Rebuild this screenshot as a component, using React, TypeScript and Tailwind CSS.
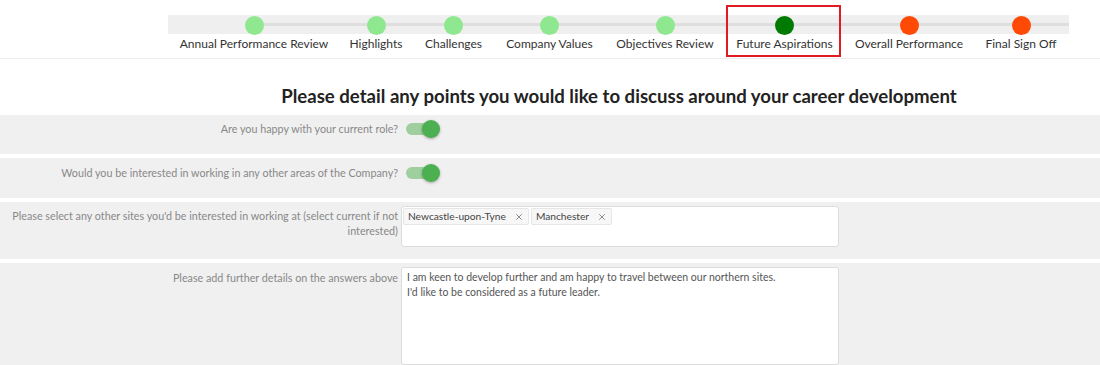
import { X } from 'lucide-react';

const steps = [
  { label: 'Annual Performance Review', color: 'bg-[#8fe88f]', w: 'w-[170px]' },
  { label: 'Highlights', color: 'bg-[#8fe88f]', w: 'w-[74px]' },
  { label: 'Challenges', color: 'bg-[#8fe88f]', w: 'w-[81px]' },
  { label: 'Company Values', color: 'bg-[#8fe88f]', w: 'w-[111px]' },
  { label: 'Objectives Review', color: 'bg-[#8fe88f]', w: 'w-[120px]' },
  { label: 'Future Aspirations', color: 'bg-[#007a00]', w: 'w-[119px]', active: true },
  { label: 'Overall Performance', color: 'bg-[#ff4a06]', w: 'w-[130px]' },
  { label: 'Final Sign Off', color: 'bg-[#ff4a06]', w: 'w-[94px]' },
];

function Toggle() {
  return (
    <div className="relative w-[36px] h-[18px] flex items-center">
      <div className="w-[30px] h-[12px] ml-[2px] rounded-full bg-[#9fcf9f]" />
      <div className="absolute right-0 top-0 w-[18px] h-[18px] rounded-full bg-[#4caf50] shadow-[0_1px_3px_rgba(0,0,0,0.3)]" />
    </div>
  );
}

function Tag({ text }: { text: string }) {
  return (
    <span className="flex items-center gap-[8px] h-[17px] px-[4px] bg-[#f7f7f7] border border-[#e6e6e6] rounded-[2px] text-[10.2px] text-[#444]">
      {text}
      <X className="w-[10px] h-[10px] text-[#777]" strokeWidth={2} />
    </span>
  );
}

export default function App() {
  return (
    <div className="w-[1100px] h-[365px] overflow-hidden bg-white font-['Lato',sans-serif]">
      <header className="h-[59px] border-b border-[#ececec] pt-[15px]">
        <div className="relative ml-[168px] w-[901px]">
          <div className="absolute left-0 top-0 w-full h-[19px] bg-[#efefef]" />
          <div className="absolute left-[85px] right-0 top-[8px] h-[3px] bg-[#dedede]" />
          <div className="relative flex pl-[1px] pt-[1px]">
            {steps.map((s) => (
              <div key={s.label} className={`relative flex flex-col items-center ${s.w}`}>
                {s.active && (
                  <div className="absolute -top-[11px] bottom-[-5px] left-[1px] right-[3px] border-2 border-[#e01b22]" />
                )}
                <div className={`w-[19px] h-[19px] rounded-full ${s.color}`} />
                <span className="mt-[1px] text-[12px] leading-[16px] text-[#333] whitespace-nowrap">
                  {s.label}
                </span>
              </div>
            ))}
          </div>
        </div>
      </header>

      <h1 className="pl-[138px] pt-[27px] pb-[8px] text-center text-[18.6px] leading-[21px] font-bold text-[#222]">
        Please detail any points you would like to discuss around your career development
      </h1>

      <div className="flex flex-col gap-[4px] text-[10.75px] text-[#888]">
        <div className="flex h-[39px] bg-[#f0f0f0] pt-[5px]">
          <div className="w-[398px] text-right pt-[1px]">Are you happy with your current role?</div>
          <div className="ml-[6px]">
            <Toggle />
          </div>
        </div>

        <div className="flex h-[40px] bg-[#f0f0f0] pt-[6px]">
          <div className="w-[398px] text-right pt-[1px]">
            Would you be interested in working in any other areas of the Company?
          </div>
          <div className="ml-[6px]">
            <Toggle />
          </div>
        </div>

        <div className="flex h-[57px] bg-[#f0f0f0] pt-[4px]">
          <div className="w-[398px] pl-[6px] text-right pt-[2px] leading-[15px]">
            Please select any other sites you'd be interested in working at (select current if not interested)
          </div>
          <div className="ml-[3px] w-[438px] h-[41px] bg-white border border-[#dcdcdc] rounded-[3px] p-[1px] flex items-start gap-[2px]">
            <Tag text="Newcastle-upon-Tyne" />
            <Tag text="Manchester" />
          </div>
        </div>

        <div className="flex h-[110px] bg-[#f0f0f0] pt-[4px]">
          <div className="w-[398px] text-right pt-[3px]">Please add further details on the answers above</div>
          <div className="ml-[3px] w-[438px] h-[98px] bg-white border border-[#dcdcdc] rounded-[3px] px-[5px] pt-[2px] text-[10.5px] leading-[15px] text-[#555]">
            <p>I am keen to develop further and am happy to travel between our northern sites.</p>
            <p>I'd like to be considered as a future leader.</p>
          </div>
        </div>
      </div>
    </div>
  );
}
